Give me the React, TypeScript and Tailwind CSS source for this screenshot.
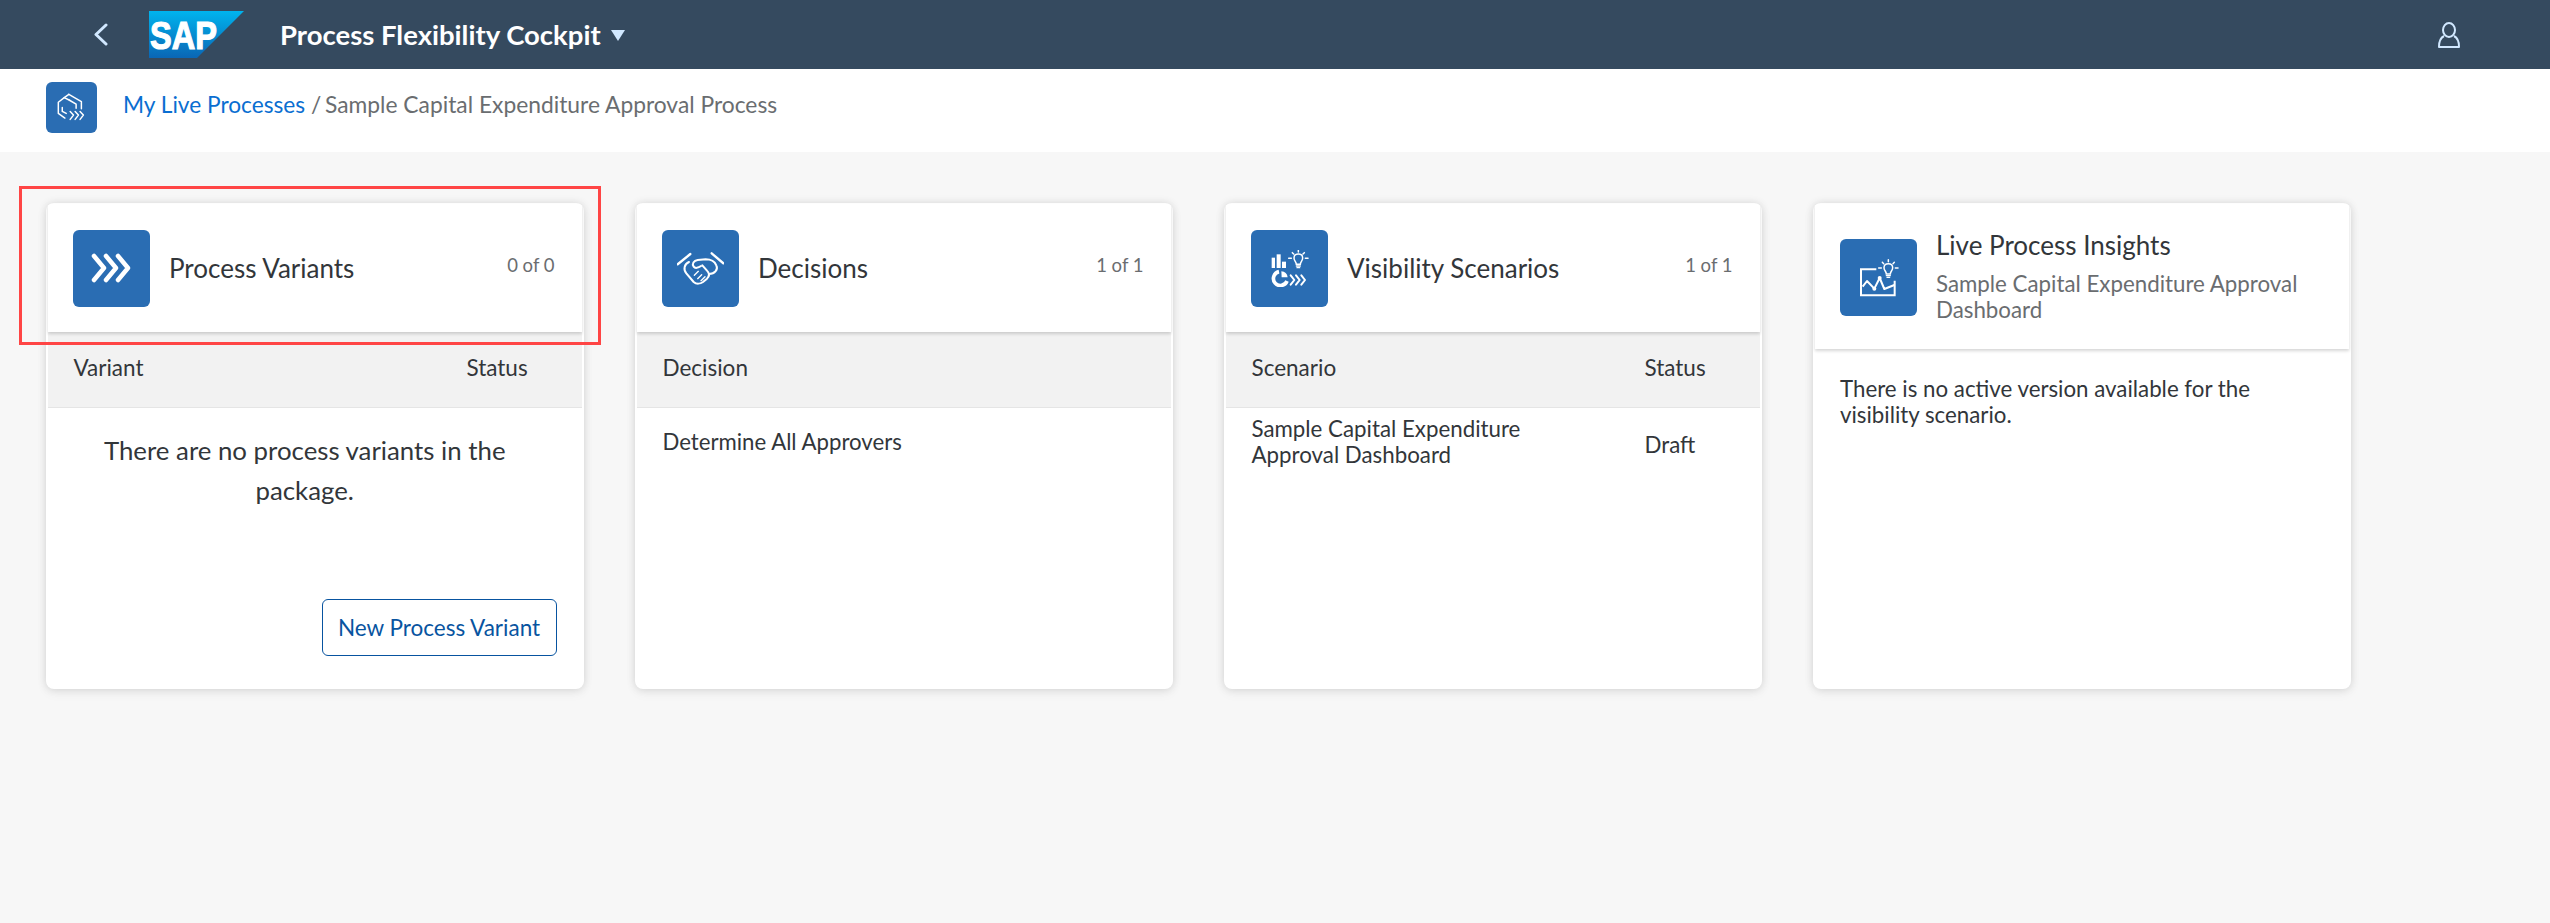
import React from "react";

const Tile = ({ children }: { children: React.ReactNode }) => (
  <div className="w-[77px] h-[77px] shrink-0 rounded-[6px] bg-[#2a6db3] flex items-center justify-center">{children}</div>
);

const Chevrons = () => (
  <svg width="41" height="30" viewBox="0 0 41 30" fill="none" stroke="#fff" strokeWidth="4.5" strokeLinecap="round" strokeLinejoin="round">
    <path d="M3 3 L13 15 L3 27" />
    <path d="M15 3 L25 15 L15 27" />
    <path d="M27 3 L37 15 L27 27" />
  </svg>
);

const Handshake = () => (
  <svg width="47" height="33" viewBox="82 106 141 99" fill="none" stroke="#fff" strokeWidth="6" strokeLinecap="round" strokeLinejoin="round">
    <path d="M84 143 L122 112" strokeWidth="7" />
    <path d="M186 110 L221 140" strokeWidth="7" />
    <path d="M118 136 C104 142 100 158 110 170 L132 196 C140 203 152 202 160 196 L172 186 C180 178 180 170 172 162 L158 146" />
    <path d="M178 172 C196 172 206 158 200 146 C194 132 180 128 168 128 L144 130 C132 132 126 142 132 150 C136 156 146 154 154 148" />
    <path d="M134 176 L146 164 M144 186 L156 174 M154 192 L166 180" strokeWidth="4" />
  </svg>
);

const Bulb = () => (
  <g fill="none" stroke="#fff" strokeLinecap="round">
    <path d="M0 -27 V-21 M-18 -19 L-14 -15 M18 -19 L14 -15 M-29 -2 H-21 M21 -2 H29" strokeWidth="4.5" />
    <path d="M-6 16 C-6 8 -13 6 -13 -3 C-13 -11 -7 -15 0 -15 C7 -15 13 -11 13 -3 C13 6 6 8 6 16 Z" strokeWidth="4.5" />
    <path d="M-6 21 H6 M-4 26 H4" strokeWidth="4" />
  </g>
);

const Visibility = () => (
  <svg width="39" height="37" viewBox="90 90 117 111">
    <rect x="95" y="113" width="10" height="31" fill="#fff" />
    <rect x="110" y="103" width="12" height="41" fill="#fff" />
    <rect x="126" y="125" width="12" height="19" fill="#fff" />
    <g transform="translate(175 117)"><Bulb /></g>
    <path d="M117 155 A21 21 0 1 0 141 183" fill="none" stroke="#fff" strokeWidth="11" />
    <path d="M124 154 A21 21 0 0 1 143 172 L125 172 Z" fill="#fff" />
    <g fill="none" stroke="#fff" strokeWidth="6" strokeLinecap="round" strokeLinejoin="round">
      <path d="M152 166 L163 180 L152 194" />
      <path d="M168 166 L179 180 L168 194" />
      <path d="M184 166 L195 180 L184 194" />
    </g>
  </svg>
);

const Insights = () => (
  <svg width="40" height="40" viewBox="84 84 120 120">
    <path d="M136 118 H90 V196 H191 V152" fill="none" stroke="#fff" strokeWidth="6" />
    <path d="M95 170 L108 153 L130 176 L146 144 L160 177 L190 165" fill="none" stroke="#fff" strokeWidth="6" strokeLinejoin="round" />
    <circle cx="130" cy="176" r="6" fill="#fff" />
    <circle cx="146" cy="144" r="6" fill="#fff" />
    <g transform="translate(172 116)"><Bulb /></g>
  </svg>
);

const PackageIcon = () => (
  <svg width="29" height="29" viewBox="84 74 88 88" fill="none" stroke="#fff" strokeWidth="4.5" strokeLinejoin="round" strokeLinecap="round">
    <path d="M120 78 L158 100 V122" />
    <path d="M106 88 L120 78" />
    <path d="M122 96 L106 88 L88 102 V136 L108 150" />
    <path d="M122 96 L142 108 V120" />
    <path d="M100 118 V130 L112 136" />
    <path d="M124 130 L134 141 L124 154 M139 130 L149 141 L139 154 M154 130 L164 141 L154 154" strokeWidth="4.5" />
  </svg>
);

const Card = ({ children }: { children: React.ReactNode }) => (
  <div className="w-[537.5px] h-[486px] shrink-0 bg-white rounded-[8px] px-[2px] pt-[1px] flex flex-col shadow-[0_0_8px_rgba(0,0,0,0.12),0_4px_12px_rgba(0,0,0,0.05)] overflow-hidden">
    {children}
  </div>
);

const CardHeader = ({ icon, title, count }: { icon: React.ReactNode; title: string; count: string }) => (
  <div className="h-[128px] shrink-0 pl-[25px] pr-[27px] flex items-center gap-[19px] shadow-[0_2px_3px_rgba(0,0,0,0.16)] relative bg-white">
    <Tile>{icon}</Tile>
    <div className="flex-1 text-[26px] text-[#32363a]">{title}</div>
    <div className="self-start mt-[48px] text-[18.5px] text-[#6a6d70]">{count}</div>
  </div>
);

const TableHead = ({ left, right }: { left: string; right?: string }) => (
  <div className="h-[76px] shrink-0 bg-[#f2f2f2] border-b border-[#e5e5e5] flex pt-[23px] pl-[25.5px] text-[22.5px] leading-[26px] text-[#32363a]">
    <div className="w-[393px]">{left}</div>
    {right && <div>{right}</div>}
  </div>
);

export default function App() {
  return (
    <div className="relative min-h-[923px] bg-[#f7f7f7] font-['Lato',sans-serif] text-[#32363a]">
      <header className="h-[69px] bg-[#354a5f] flex items-center pl-[93px] pr-[89px]">
        <svg width="15" height="23" viewBox="0 0 15 23" fill="none" stroke="#d1e8ff" strokeWidth="3" strokeLinecap="round" strokeLinejoin="round">
          <path d="M13 2 L3 11.5 L13 21" />
        </svg>
        <svg className="ml-[41px]" width="95" height="47" viewBox="0 0 95 47">
          <defs>
            <linearGradient id="sapg" x1="0" y1="0" x2="0" y2="1">
              <stop offset="0" stopColor="#00b4ee" />
              <stop offset="1" stopColor="#0a66b5" />
            </linearGradient>
          </defs>
          <polygon points="0,0 95,0 48,47 0,47" fill="url(#sapg)" />
          <text x="1" y="38" fontFamily="Liberation Sans" fontWeight="700" fontSize="39" fill="#fff" stroke="#fff" strokeWidth="1.2" textLength="67" lengthAdjust="spacingAndGlyphs">SAP</text>
        </svg>
        <div className="ml-[36px] text-[27.5px] font-bold text-white whitespace-nowrap">Process Flexibility Cockpit</div>
        <svg className="ml-[10px] mt-[1px]" width="14" height="11" viewBox="0 0 14 11"><polygon points="0,0 14,0 7,11" fill="#d1e8ff" /></svg>
        <svg className="ml-auto" width="24" height="26" viewBox="0 0 24 26" fill="none" stroke="#d1e8ff" strokeWidth="2">
          <ellipse cx="12" cy="8" rx="6" ry="7" />
          <path d="M7 14 C3 16 2 19 2 25 H22 C22 19 21 16 17 14" strokeLinejoin="round" />
        </svg>
      </header>

      <div className="h-[83px] bg-white flex items-start pl-[46px] pt-[13px]">
        <div className="w-[51px] h-[51px] rounded-[6px] bg-[#2a6db3] flex items-center justify-center"><PackageIcon /></div>
        <div className="ml-[26px] mt-[9px] text-[22.7px] leading-[26px] text-[#6a6d70]">
          <span className="text-[#0a6ed1]">My Live Processes</span> / <span className="ml-[-2px] text-[22.8px]">Sample Capital Expenditure Approval Process</span>
        </div>
      </div>

      <main className="flex gap-[51.5px] pl-[46px] pt-[51px]">
        <Card>
          <CardHeader icon={<Chevrons />} title="Process Variants" count="0 of 0" />
          <TableHead left="Variant" right="Status" />
          <div className="mt-[22px] pl-[30px] pr-[50px] text-center text-[25.8px] leading-[40px]">There are no process variants in the package.</div>
          <button className="mt-auto mb-[33px] mr-[25px] self-end w-[235px] h-[57px] rounded-[6px] border-[1.5px] border-[#0854a0] text-[22.5px] text-[#0854a0]">New Process Variant</button>
        </Card>
        <Card>
          <CardHeader icon={<Handshake />} title="Decisions" count="1 of 1" />
          <TableHead left="Decision" />
          <div className="pl-[25.5px] pt-[21px] text-[22.2px] leading-[26px]">Determine All Approvers</div>
        </Card>
        <Card>
          <CardHeader icon={<Visibility />} title="Visibility Scenarios" count="1 of 1" />
          <TableHead left="Scenario" right="Status" />
          <div className="flex items-start pl-[25.5px] pt-[8px] text-[22.3px] leading-[26px]">
            <div className="w-[393px]">Sample Capital Expenditure<br />Approval Dashboard</div>
            <div className="mt-[16px]">Draft</div>
          </div>
        </Card>
        <Card>
          <div className="h-[145px] shrink-0 pl-[25px] pr-[20px] flex items-start gap-[19px] shadow-[0_2px_3px_rgba(0,0,0,0.16)] bg-white">
            <div className="mt-[35px]"><Tile><Insights /></Tile></div>
            <div className="pt-[26px]">
              <div className="text-[26px] leading-[30px]">Live Process Insights</div>
              <div className="mt-[11px] text-[22.3px] leading-[26px] text-[#6a6d70]">Sample Capital Expenditure Approval<br />Dashboard</div>
            </div>
          </div>
          <div className="pl-[25px] pr-[40px] pt-[27px] text-[22.3px] leading-[26px]">There is no active version available for the<br />visibility scenario.</div>
        </Card>
      </main>

      <div className="absolute left-[19px] top-[186px] w-[582px] h-[159px] border-[3px] border-[#ff4545] pointer-events-none" />
    </div>
  );
}
